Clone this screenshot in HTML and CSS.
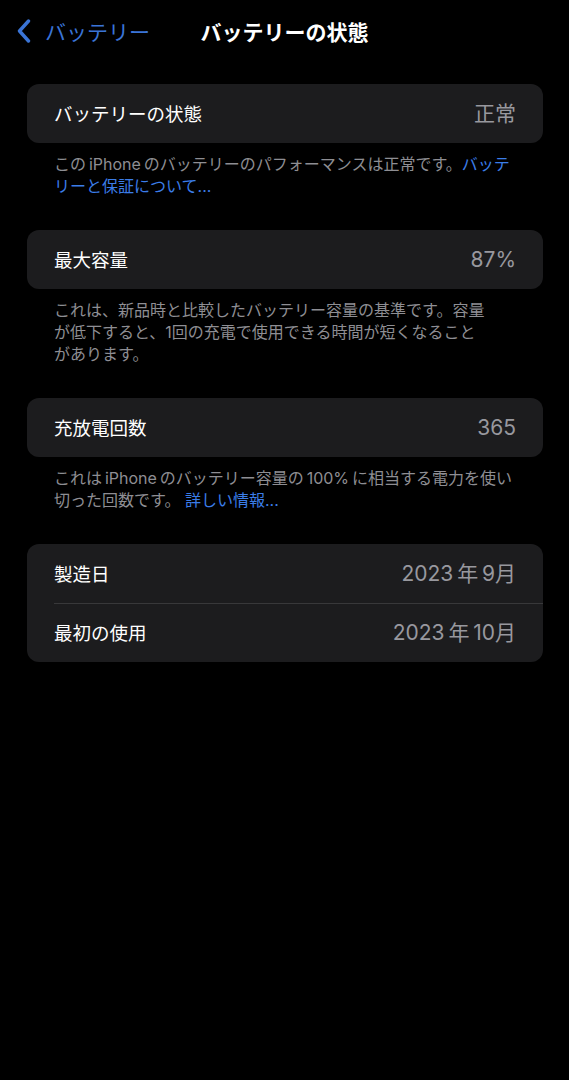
FILE: index.html
```html
<!DOCTYPE html>
<html lang="ja">
<head>
  <meta charset="UTF-8">
  <title>バッテリーの状態</title>
  <link rel="stylesheet" href="styles.css">
</head>
<body>

  <header class="nav">
    <a class="back" href="#">
      <svg class="chevron" viewBox="0 0 14 24" width="14" height="24">
        <path d="M11.5 2 L2.5 12 L11.5 22" fill="none" stroke="currentColor" stroke-width="3.4" stroke-linecap="round" stroke-linejoin="round"/>
      </svg>
      <span>バッテリー</span>
    </a>
    <h1 class="title">バッテリーの状態</h1>
    <span></span>
  </header>

  <main class="content">
    <section class="group">
      <div class="card">
        <div class="row"><span class="label">バッテリーの状態</span><span class="value">正常</span></div>
      </div>
      <p class="note">この&thinsp;iPhone&thinsp;のバッテリーのパフォーマンスは正常です。<a href="#">バッテリーと保証について...</a></p>
    </section>

    <section class="group">
      <div class="card">
        <div class="row"><span class="label">最大容量</span><span class="value">87%</span></div>
      </div>
      <p class="note">これは、新品時と比較したバッテリー容量の基準です。容量<br>が低下すると、1回の充電で使用できる時間が短くなること<br>があります。</p>
    </section>

    <section class="group">
      <div class="card">
        <div class="row"><span class="label">充放電回数</span><span class="value">365</span></div>
      </div>
      <p class="note">これは&thinsp;iPhone&thinsp;のバッテリー容量の&thinsp;100%&thinsp;に相当する電力を使い<br>切った回数です。 <a href="#">詳しい情報...</a></p>
    </section>

    <section class="group">
      <div class="card">
        <div class="row"><span class="label">製造日</span><span class="value">2023&thinsp;年&thinsp;9月</span></div>
        <div class="row"><span class="label">最初の使用</span><span class="value">2023&thinsp;年&thinsp;10月</span></div>
      </div>
    </section>
  </main>

</body>
</html>
```

FILE: styles.css
```css
body {
  margin: 0;
  background-color: #000;
  color: #fff;
  font-family: Inter, "Noto Sans CJK JP", sans-serif;
  min-height: 100vh;
}

a {
  color: #3b7de8;
  text-decoration: none;
}

.nav {
  display: grid;
  grid-template-columns: 1fr auto 1fr;
  align-items: center;
  height: 62px;
}

.back {
  display: flex;
  align-items: center;
  gap: 14px;
  padding-left: 17px;
  font-size: 21px;
  color: #3a74d6;
}

.chevron {
  display: block;
}

.title {
  margin: 0;
  font-size: 21px;
  font-weight: 700;
}

.content {
  padding: 22px 26px 0 27px;
  display: flex;
  flex-direction: column;
  gap: 33px;
}

.card {
  background-color: #1c1c1e;
  border-radius: 12px;
  overflow: hidden;
}

.row {
  display: flex;
  justify-content: space-between;
  align-items: center;
  height: 59px;
  padding: 0 27px;
  font-size: 18.5px;
  line-height: 24px;
}

.row + .row {
  position: relative;
}

.row + .row::before {
  content: "";
  position: absolute;
  left: 27px;
  right: 0;
  top: 0;
  border-top: 1px solid #38383a;
}

.value {
  color: #98989e;
  font-size: 21px;
}

.note {
  margin: 10px 0 0;
  padding: 0 27px;
  font-size: 16px;
  line-height: 22px;
  color: #8e8e93;
}
```
